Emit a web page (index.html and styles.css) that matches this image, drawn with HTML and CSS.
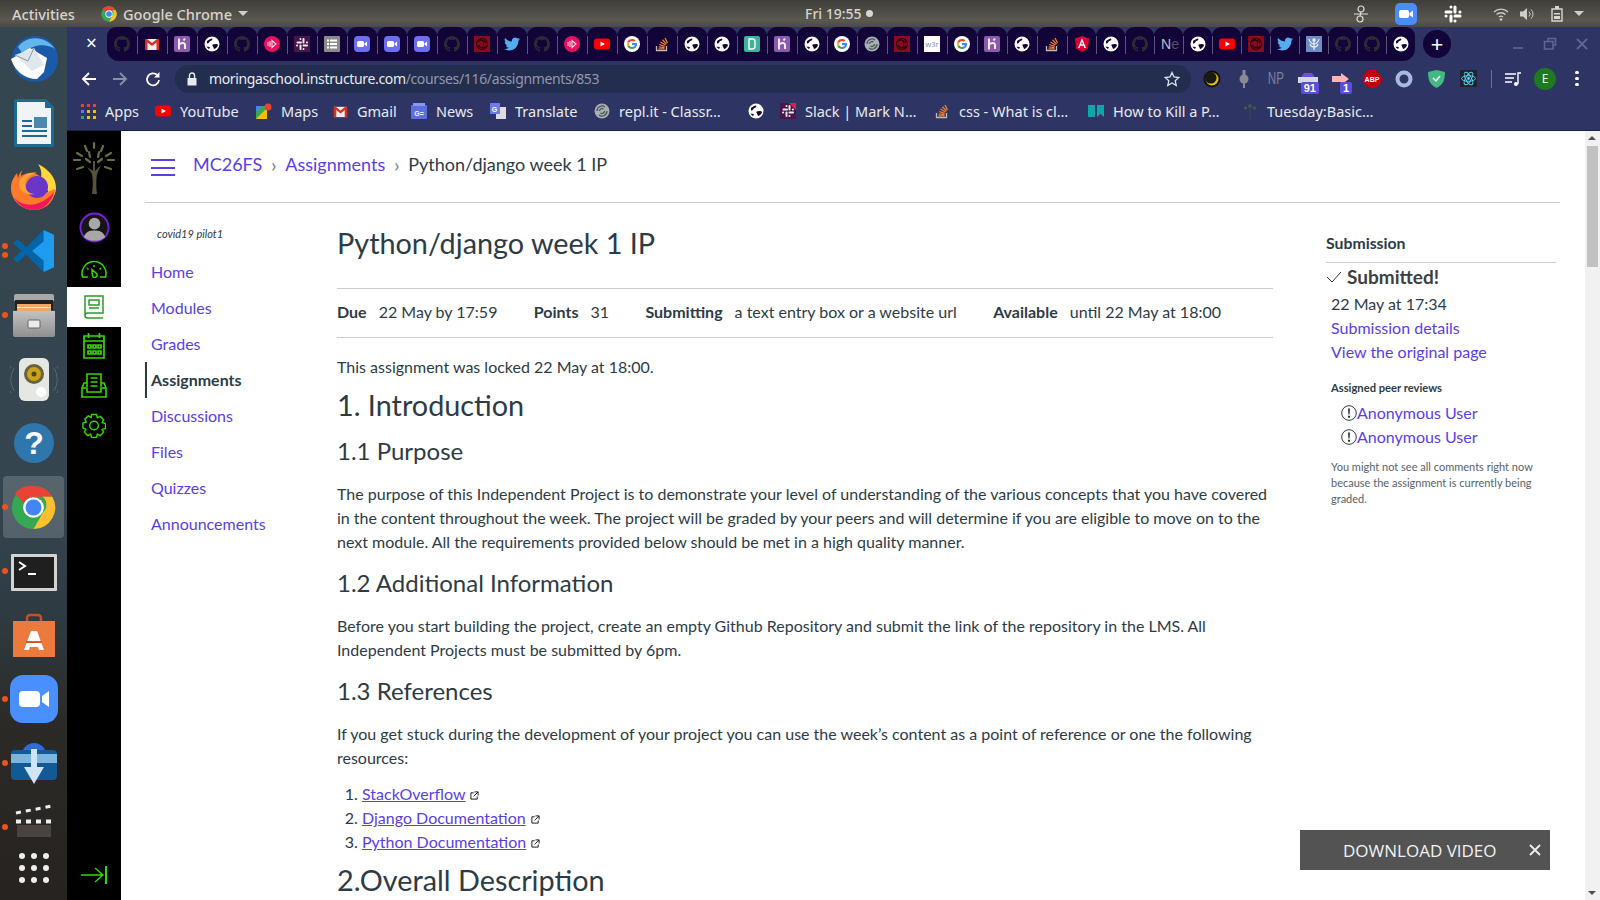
FILE: index.html
```html
<!DOCTYPE html>
<html lang="en">
<head>
    <meta charset="UTF-8">
    <title>Python/django week 1 IP</title>
    <link rel="stylesheet" href="styles.css">
</head>
<body>

<!-- shared favicons -->
<svg class="sprite" width="0" height="0">
    <symbol id="gh" viewBox="0 0 16 16"><path fill="#2b2c33" d="M8 0C3.58 0 0 3.58 0 8c0 3.54 2.29 6.53 5.47 7.59.4.07.55-.17.55-.38 0-.19-.01-.82-.01-1.49-2.01.37-2.53-.49-2.69-.94-.09-.23-.48-.94-.82-1.13-.28-.15-.68-.52-.01-.53.63-.01 1.08.58 1.23.82.72 1.21 1.87.87 2.33.66.07-.52.28-.87.51-1.07-1.78-.2-3.64-.89-3.64-3.95 0-.87.31-1.59.82-2.15-.08-.2-.36-1.02.08-2.12 0 0 .67-.21 2.2.82.64-.18 1.32-.27 2-.27.68 0 1.36.09 2 .27 1.53-1.04 2.2-.82 2.2-.82.44 1.1.16 1.92.08 2.12.51.56.82 1.27.82 2.15 0 3.07-1.87 3.75-3.65 3.95.29.25.54.73.54 1.48 0 1.07-.01 1.93-.01 2.2 0 .21.15.46.55.38A8.013 8.013 0 0016 8c0-4.42-3.58-8-8-8z"/></symbol>
    <symbol id="gmail" viewBox="0 0 16 16"><path fill="#eee" d="M1 3h14v11H1z"/><path fill="#d93025" d="M1 3h2l5 4 5-4h2v11h-2.500V6.500L8 10 3.500 6.500V14H1z"/></symbol>
    <symbol id="heroku" viewBox="0 0 16 16"><rect width="16" height="16" rx="2" fill="#8d5ab0"/><path fill="none" stroke="#eee" stroke-width="2" d="M5 2.500V13.500M5 8.500c2-1.500 6-2.500 6 .5V13M11 2.500l-1.500 2"/></symbol>
    <symbol id="globe" viewBox="0 0 16 16"><circle cx="8" cy="8" r="7.500" fill="#fff"/><path fill="#120338" d="M3 5c2-1.500 4-2.500 5-2.500 1 1 0 2-1.500 2.500S5 8 3 7.500zM8.500 8.500c2-.5 4.500-1 5.500.5-.5 2-2 3.500-4 4 0-1.500-2-3-1.500-4.500zM2.500 10.500c1 .5 2.500 0 3.500 1l-1 1.500c-1-.5-2-1.500-2.500-2.500z"/></symbol>
    <symbol id="podcast" viewBox="0 0 16 16"><circle cx="8" cy="8" r="8" fill="#e6125f"/><path fill="none" stroke="#ffd9e6" stroke-width="1.100" d="M4 6v4M6 5v6M8 4.500v7l4-3.500z"/></symbol>
    <symbol id="slack" viewBox="0 0 16 16"><rect width="16" height="16" fill="#4a154b"/><g stroke="#eee" stroke-width="2" stroke-linecap="round"><path d="M3.500 6.500H7M6.500 3v.1M9.500 3v3.500M13 6.500h-.1M9.500 9.500H13M9.500 13v-.1M6.500 13V9.500M3 9.500h.1"/></g></symbol>
    <symbol id="list" viewBox="0 0 16 16"><rect width="16" height="16" rx="1" fill="#8b8b8b"/><path stroke="#fff" stroke-width="2" d="M6 4.500h7M6 8h7M6 11.500h7M3 4.500h2M3 8h2M3 11.500h2"/></symbol>
    <symbol id="zoomfav" viewBox="0 0 16 16"><rect width="16" height="16" rx="4" fill="#6e6ef0"/><rect x="3" y="5" width="7" height="6" rx="1.500" fill="#fff"/><path fill="#fff" d="M10.500 7.500 13 5.500v5l-2.500-2z"/></symbol>
    <symbol id="solo" viewBox="0 0 16 16"><rect width="16" height="16" fill="#8a0b1c"/><g fill="none" stroke="#2b0410" stroke-width="1.200"><circle cx="8" cy="8" r="5.500"/><path d="M3 6c3-3 8-2 9 1M13 10c-3 3-8 2-9-1M6 3c3 1 5 4 3 8"/></g></symbol>
    <symbol id="tw" viewBox="0 0 24 24"><path fill="#55acee" d="M23.953 4.570a10 10 0 01-2.825.775 4.958 4.958 0 002.163-2.723c-.951.555-2.005.959-3.127 1.184a4.920 4.920 0 00-8.384 4.482C7.690 8.095 4.067 6.130 1.640 3.162a4.822 4.822 0 00-.666 2.475c0 1.710.870 3.213 2.188 4.096a4.904 4.904 0 01-2.228-.616v.060a4.923 4.923 0 003.946 4.827 4.996 4.996 0 01-2.212.085 4.936 4.936 0 004.604 3.417 9.867 9.867 0 01-6.102 2.105c-.390 0-.779-.023-1.170-.067a13.995 13.995 0 007.557 2.209c9.053 0 13.998-7.496 13.998-13.985 0-.210 0-.420-.015-.630A9.935 9.935 0 0024 4.590z"/></symbol>
    <symbol id="yt" viewBox="0 0 16 16"><rect y="2.500" width="16" height="11" rx="3" fill="#f00"/><path fill="#fff" d="M6.500 5.500 11 8l-4.500 2.500z"/></symbol>
    <symbol id="goog" viewBox="0 0 16 16"><circle cx="8" cy="8" r="8" fill="#fff"/><path fill="#4285f4" d="M13 8.200c0-.4 0-.7-.1-1.100H8v2h2.800c-.1.700-.5 1.200-1 1.600l1.600 1.200c1-.9 1.600-2.200 1.600-3.700z"/><path fill="#34a853" d="M8 13c1.400 0 2.500-.4 3.400-1.200l-1.600-1.200c-.5.300-1.100.5-1.800.5-1.300 0-2.500-.9-2.900-2.100L3.400 10.200C4.200 11.900 6 13 8 13z"/><path fill="#fbbc05" d="M5.100 9c-.2-.6-.2-1.300 0-1.900L3.400 5.800c-.7 1.400-.7 3 0 4.400z"/><path fill="#ea4335" d="M8 5c.8 0 1.400.3 1.900.8l1.500-1.500C10.500 3.500 9.400 3 8 3 6 3 4.200 4.100 3.400 5.800l1.700 1.300C5.500 5.900 6.700 5 8 5z"/></symbol>
    <symbol id="so" viewBox="0 0 16 16"><path fill="none" stroke="#bcbbbb" stroke-width="1.300" d="M2.500 10v4.500h10V10"/><path fill="none" stroke="#f48024" stroke-width="1.300" d="M4.500 12.800h6M4.700 10.800l5.800.8M5.200 8.500l5.500 1.900M6.500 6l5 3M8.500 3.800l4 4.300M11 2l2.500 5"/></symbol>
    <symbol id="dj" viewBox="0 0 16 16"><rect width="16" height="16" rx="2" fill="#3eb39b"/><path fill="none" stroke="#fff" stroke-width="1.400" d="M5 3h3.500a2.500 2.500 0 0 1 2.500 2.500v5A2.500 2.500 0 0 1 8.500 13H5z"/></symbol>
    <symbol id="repl" viewBox="0 0 16 16"><circle cx="8" cy="8" r="7.500" fill="#a9b0b4"/><g fill="none" stroke="#4a5358" stroke-width="1.300"><path d="M3 8a5 5 0 0 1 8-4M13 8a5 5 0 0 1-8 4M5.500 8a2.500 2.500 0 0 1 4-2M10.500 8a2.500 2.500 0 0 1-4 2"/></g></symbol>
    <symbol id="angular" viewBox="0 0 16 16"><path fill="#dd0031" d="M8 0 1 2.500l1 10L8 16l6-3.500 1-10z"/><path fill="#fff" d="M8 2 4 12h1.500l.9-2.300h3.200l.9 2.300H12zM7 8.300 8 5.800l1 2.500z"/></symbol>
    <symbol id="shield" viewBox="0 0 16 16"><rect width="16" height="16" fill="#6f8cc4"/><path fill="none" stroke="#e8eef8" stroke-width="1.200" d="M8 5v9M8 8C6 8 3.500 6 3 3M8 8c2 0 4.500-2 5-5M8 11c-2 0-3.500-1-4-3M8 11c2 0 3.500-1 4-3"/><circle cx="8" cy="4" r="1.800" fill="#e8eef8"/></symbol>
    <symbol id="chrome" viewBox="0 0 48 48"><circle cx="24" cy="24" r="23" fill="#34a853"/><path fill="#ea4335" d="M24 1a23 23 0 0 1 20 11.500H24a11.500 11.500 0 0 0-10.500 7L4 9A23 23 0 0 1 24 1z"/><path fill="#fbc02d" d="M44 12.500A23 23 0 0 1 24 47l10-17.500a11.500 11.500 0 0 0 0-17z"/><circle cx="24" cy="24" r="11" fill="#fff"/><circle cx="24" cy="24" r="8.500" fill="#4285f4"/></symbol>
    <symbol id="extlink" viewBox="0 0 10 10"><path fill="none" stroke="#1c1c1c" stroke-width="1.100" d="M4 2H1v7h7V6M5 1h4v4M9 1 4 6"/></symbol>
    <symbol id="warn" viewBox="0 0 16 16"><circle cx="8" cy="8" r="7.300" fill="none" stroke="#2d3b45" stroke-width="1"/><path fill="#2d3b45" d="M7 3.500h2L8.600 9.500H7.400zM7 10.800h2v2H7z"/></symbol>
</svg>

<div class="topbar">
    <div class="top-left">
        <span class="activities">Activities</span>
        <svg class="top-chrome" width="16" height="16"><use href="#chrome"/></svg>
        <span class="appname">Google Chrome</span>
        <span class="caret"></span>
    </div>
    <div class="clock">Fri 19:55 <span class="clock-dot"></span></div>
    <div class="tray">
        <svg class="tray-person" width="16" height="18" viewBox="0 0 16 18"><g fill="none" stroke="#ddd" stroke-width="1.200"><circle cx="8" cy="4" r="3"/><circle cx="7" cy="14" r="3"/><path d="M1 9h14M8 7 7 11"/></g></svg>
        <svg class="tray-zoom" width="22" height="22" viewBox="0 0 22 22"><rect width="22" height="22" rx="5" fill="#4a8cff"/><rect x="4" y="7" width="10" height="8" rx="2" fill="#fff"/><path fill="#fff" d="m14.500 10 3.500-2.500v7L14.500 12z"/></svg>
        <svg class="tray-slack" width="20" height="20" viewBox="0 0 20 20"><g stroke="#fff" stroke-width="3" stroke-linecap="round"><path d="M3 8h5M8 3v.1M12 3v5M17 8h-.1M12 12h5M12 17v-.1M8 17v-5M3 12h.1"/></g></svg>
        <svg class="tray-wifi" width="16" height="14" viewBox="0 0 16 14"><g fill="none" stroke="#cfcdc6" stroke-width="1.400"><path d="M1 5a10 10 0 0 1 14 0M3.500 7.500a6.500 6.500 0 0 1 9 0"/><path d="M6 10a3 3 0 0 1 4 0"/></g><circle cx="8" cy="12.500" r="1.300" fill="#cfcdc6"/></svg>
        <svg class="tray-vol" width="16" height="14" viewBox="0 0 16 14"><path fill="#cfcdc6" d="M1 4.500h3L8 1v12L4 9.500H1z"/><path fill="none" stroke="#cfcdc6" d="M10 4.500a3.500 3.500 0 0 1 0 5M12 2.500a6 6 0 0 1 0 9"/></svg>
        <svg class="tray-batt" width="12" height="16" viewBox="0 0 12 16"><path fill="none" stroke="#d8d6cf" stroke-width="1.400" d="M1 3h10v12H1z"/><path fill="#d8d6cf" d="M4 0h4v3H4zM3 7h6v1.500H3zM3 10h6v3H3z"/></svg>
        <span class="caret"></span>
    </div>
</div>

<div class="desktop">
    <div class="dock">
        <div class="dock-item"><svg width="48" height="48" viewBox="0 0 48 48"><circle cx="25" cy="24" r="23" fill="#1b5aa8"/><path fill="#64b5ee" d="M8 12C16 0 36 0 45 14c-8-5-20-5-27 1l-6 3z"/><path fill="#fff" d="M1 24 20 13l17 10-3 14-7 7C14 44 5 36 1 24z"/><path fill="#dfe6ec" d="M5 20 24 13l10 17-12 6z"/><path fill="none" stroke="#8b97a1" d="m5 20 13 6 6-13"/></svg></div>
        <div class="dock-item"><svg width="40" height="48" viewBox="0 0 40 48"><path fill="#1c6a96" d="M0 2a2 2 0 0 1 2-2h30l8 8v38a2 2 0 0 1-2 2H2a2 2 0 0 1-2-2z"/><path fill="#f1f4f6" d="M3 3h28v6h6v36H3z"/><path stroke="#1c6a96" stroke-width="2" d="M8 22h10M8 27h10M8 32h25M8 37h25"/><path fill="#4d87ab" d="M20 18h13v11H20z"/></svg></div>
        <div class="dock-item"><svg width="46" height="46" viewBox="0 0 46 46"><path fill="#ffd73a" d="M27 0c10 5 18 13 18 24 0 4-2 8-4 11L30 14c1-5 0-10-3-14z"/><path fill="#ff7a2a" d="M12 5c-2 3-2 5-2 7 3-2 6-3 10-3 7 0 14 6 14 14 0 5-4 9-10 10l20-8c0 13-10 21-21 21C10 46 0 36 0 24 0 17 3 13 6 9l1 5c1-4 3-7 5-9z"/><path fill="#f0175f" d="M3 33c6 9 25 13 40-5-3 11-11 18-20 18C14 46 7 41 3 33z"/><circle cx="26" cy="23" r="11" fill="#6a35c9"/><path fill="#ffa23a" d="M8 19c2-7 10-12 18-10-6 1-12 5-12 12 0 5 4 9 10 9-8 2-17-3-16-11z"/></svg></div>
        <div class="dock-item"><svg width="42" height="42" viewBox="0 0 44 44"><path fill="#0065a9" d="M32 0 14 18 5 10 0 14l9 8-9 8 5 4 9-8 18 18z"/><path fill="#1f9cf0" d="m32 0 11 5v34l-11 5zM32 12 20 22l12 10z"/></svg></div>
        <div class="dock-item"><svg width="42" height="43" viewBox="0 0 42 43"><defs><linearGradient id="cab" x1="0" y1="0" x2="0" y2="1"><stop offset="0" stop-color="#c2c2c2"/><stop offset="1" stop-color="#8f8f8f"/></linearGradient></defs><path fill="#a8a8a8" d="M1 2a2 2 0 0 1 2-2h36a2 2 0 0 1 2 2v5H1z"/><path fill="#222" d="M2 6h38v10H2z"/><path fill="#f0a868" d="M4 10h34v7H4z"/><path fill="#fbe3c8" d="M4 13h34v1H4z"/><path fill="url(#cab)" d="M0 17h42v24a2 2 0 0 1-2 2H2a2 2 0 0 1-2-2z"/><rect x="15" y="26" width="12" height="8" rx="1" fill="#ececec" stroke="#666"/></svg></div>
        <div class="dock-item"><svg width="48" height="43" viewBox="0 0 48 43"><g fill="none" stroke="#506a78"><path d="M4 10a22 22 0 0 0 0 23M44 10a22 22 0 0 1 0 23M1 8a26 26 0 0 0 0 27M47 8a26 26 0 0 1 0 27"/></g><rect x="9" y="0" width="30" height="43" rx="6" fill="#e4e7e4"/><circle cx="24" cy="16" r="10" fill="#6a6238"/><circle cx="24" cy="16" r="7" fill="#c9a21f"/><circle cx="24" cy="16" r="2.500" fill="#4f4718"/><circle cx="31" cy="34" r="5" fill="#fff"/></svg></div>
        <div class="dock-item"><svg width="40" height="40" viewBox="0 0 40 40"><circle cx="20" cy="20" r="20" fill="#2f76ad"/><text x="20" y="31" text-anchor="middle" class="help-mark">?</text></svg></div>
        <div class="dock-item dock-active"><svg width="45" height="45"><use href="#chrome"/></svg></div>
        <div class="dock-item dock-term"><svg width="46" height="37" viewBox="0 0 46 37"><rect width="46" height="37" rx="1" fill="#d3d3d3"/><rect x="3" y="3" width="40" height="31" fill="#1f1f1f"/><path fill="none" stroke="#fff" stroke-width="2" d="m8 8 6 4-6 4"/><path stroke="#fff" stroke-width="2" d="M17 20h8"/></svg></div>
        <div class="dock-item"><svg width="42" height="44" viewBox="0 0 42 44"><path fill="none" stroke="#c9501e" stroke-width="2.500" d="M14 13V5a3 3 0 0 1 3-3h8a3 3 0 0 1 3 3v8"/><path fill="#ec7a3c" d="M0 8h42v36H0z"/><path fill="#fff" d="M18 18h6l7 19h-5l-1-3h-8l-1 3h-5z"/><path fill="#e2561d" d="M13 28h16v2H13z"/></svg></div>
        <div class="dock-item"><svg width="48" height="48" viewBox="0 0 48 48"><rect width="48" height="48" rx="13" fill="#4a8fff"/><rect x="9" y="16" width="21" height="16" rx="4" fill="#fff"/><path fill="#fff" d="m32 21 7-5v16l-7-5z"/></svg></div>
        <div class="dock-item"><svg width="46" height="41" viewBox="0 0 46 41"><circle cx="23" cy="12" r="12" fill="#2f6cd6"/><rect y="7" width="46" height="30" rx="4" fill="#125a96"/><path fill="#7fb4df" d="M0 11h46v9H0z"/><path fill="#cfe4f5" d="M20 6h6v18h7L23 41 13 24h7z"/></svg></div>
        <div class="dock-item dock-clap"><svg width="40" height="33" viewBox="0 0 40 33"><path fill="#2b2b2b" d="M0 8 38 0l1 5L1 13z"/><path stroke="#eee" stroke-width="3" stroke-dasharray="5 5" d="M2 9 38 2"/><path fill="#2b2b2b" d="M1 15h38v5H1z"/><path stroke="#eee" stroke-width="4" stroke-dasharray="5 5" d="M2 17.500h36"/><path fill="#4a4440" d="M3 21h34v12H3z"/></svg></div>
        <div class="dock-grid">
            <span></span><span></span><span></span>
            <span></span><span></span><span></span>
            <span></span><span></span><span></span>
        </div>
        <div class="dock-dots">
            <i class="dot-vs1"></i><i class="dot-vs2"></i><i class="dot-files"></i><i class="dot-chrome"></i><i class="dot-term"></i><i class="dot-zoom"></i><i class="dot-down"></i><i class="dot-clap"></i>
        </div>
    </div>

    <div class="browser">
        <div class="tabstrip">
            <div class="tab-active">×</div>
            <div class="tabs">
                <div class="tab"><svg><use href="#gh"/></svg></div>
                <div class="tab"><svg><use href="#gmail"/></svg></div>
                <div class="tab"><svg><use href="#heroku"/></svg></div>
                <div class="tab"><svg><use href="#globe"/></svg></div>
                <div class="tab"><svg><use href="#gh"/></svg></div>
                <div class="tab"><svg><use href="#podcast"/></svg></div>
                <div class="tab"><svg><use href="#slack"/></svg></div>
                <div class="tab"><svg><use href="#list"/></svg></div>
                <div class="tab"><svg><use href="#zoomfav"/></svg></div>
                <div class="tab"><svg><use href="#zoomfav"/></svg></div>
                <div class="tab"><svg><use href="#zoomfav"/></svg></div>
                <div class="tab"><svg><use href="#gh"/></svg></div>
                <div class="tab"><svg><use href="#solo"/></svg></div>
                <div class="tab"><svg><use href="#tw"/></svg></div>
                <div class="tab"><svg><use href="#gh"/></svg></div>
                <div class="tab"><svg><use href="#podcast"/></svg></div>
                <div class="tab"><svg><use href="#yt"/></svg></div>
                <div class="tab"><svg><use href="#goog"/></svg></div>
                <div class="tab"><svg><use href="#so"/></svg></div>
                <div class="tab"><svg><use href="#globe"/></svg></div>
                <div class="tab"><svg><use href="#globe"/></svg></div>
                <div class="tab"><svg><use href="#dj"/></svg></div>
                <div class="tab"><svg><use href="#heroku"/></svg></div>
                <div class="tab"><svg><use href="#globe"/></svg></div>
                <div class="tab"><svg><use href="#goog"/></svg></div>
                <div class="tab"><svg><use href="#repl"/></svg></div>
                <div class="tab"><svg><use href="#solo"/></svg></div>
                <div class="tab"><svg viewBox="0 0 16 16"><rect width="16" height="16" fill="#fff"/><text x="8" y="11" text-anchor="middle" class="fav-w3r">w3r</text></svg></div>
                <div class="tab"><svg><use href="#goog"/></svg></div>
                <div class="tab"><svg><use href="#heroku"/></svg></div>
                <div class="tab"><svg><use href="#globe"/></svg></div>
                <div class="tab"><svg><use href="#so"/></svg></div>
                <div class="tab tab-narrow"><svg><use href="#angular"/></svg></div>
                <div class="tab tab-narrow"><svg><use href="#globe"/></svg></div>
                <div class="tab tab-narrow"><svg><use href="#gh"/></svg></div>
                <div class="tab tab-narrow tab-n">N<span>e</span></div>
                <div class="tab tab-narrow"><svg><use href="#globe"/></svg></div>
                <div class="tab tab-narrow"><svg><use href="#yt"/></svg></div>
                <div class="tab tab-narrow"><svg><use href="#solo"/></svg></div>
                <div class="tab tab-narrow"><svg><use href="#tw"/></svg></div>
                <div class="tab tab-narrow"><svg><use href="#shield"/></svg></div>
                <div class="tab tab-narrow"><svg><use href="#gh"/></svg></div>
                <div class="tab tab-narrow"><svg><use href="#gh"/></svg></div>
                <div class="tab tab-narrow"><svg><use href="#globe"/></svg></div>
            </div>
            <div class="newtab">+</div>
            <div class="winctl">
                <svg width="14" height="14" viewBox="0 0 14 14"><path stroke="#5f678f" stroke-width="1.600" d="M2 11h10"/></svg>
                <svg width="14" height="14" viewBox="0 0 14 14"><path fill="none" stroke="#5f678f" stroke-width="1.600" d="M5 4V1.500h7.500V8H10M1.500 4.500H10V12H1.500z"/></svg>
                <svg width="14" height="14" viewBox="0 0 14 14"><path stroke="#5f678f" stroke-width="1.800" d="m2 2 10 10M12 2 2 12"/></svg>
            </div>
        </div>

        <div class="toolbar">
            <svg class="nav-btn" width="18" height="18" viewBox="0 0 18 18"><path fill="none" stroke="#fff" stroke-width="1.800" d="M16 9H3M9 3 3 9l6 6"/></svg>
            <svg class="nav-btn nav-fwd" width="18" height="18" viewBox="0 0 18 18"><path fill="none" stroke="#8a8fa8" stroke-width="1.800" d="M2 9h13M9 3l6 6-6 6"/></svg>
            <svg class="nav-btn" width="18" height="18" viewBox="0 0 18 18"><path fill="none" stroke="#fff" stroke-width="1.800" d="M15 10a6 6 0 1 1-1.800-5"/><path fill="#fff" d="M15.500 2v5.500H10z"/></svg>
            <div class="omnibox">
                <svg class="lock" width="12" height="14" viewBox="0 0 12 14"><path fill="#e8eaf0" d="M1.500 6h9v7.500h-9z"/><path fill="none" stroke="#e8eaf0" stroke-width="1.400" d="M3.500 6V3.500a2.500 2.500 0 0 1 5 0V6"/></svg>
                <span class="url">moringaschool.instructure.com<span class="url-path">/courses/116/assignments/853</span></span>
                <svg class="star" width="16" height="16" viewBox="0 0 16 16"><path fill="none" stroke="#dfe1ea" stroke-width="1.300" d="m8 1.500 2 4.500 4.800.5-3.600 3.200 1 4.800L8 12l-4.200 2.500 1-4.800L1.200 6.500 6 6z"/></svg>
            </div>
            <div class="extensions">
                <div class="ext"><svg width="18" height="18" viewBox="0 0 18 18"><circle cx="9" cy="9" r="8.500" fill="#111"/><circle cx="9" cy="9" r="6.500" fill="#d8c400"/><circle cx="7.800" cy="7.800" r="5.800" fill="#1a1a10"/></svg></div>
                <div class="ext"><svg width="12" height="20" viewBox="0 0 12 20"><g fill="#8a8a92"><circle cx="6" cy="10" r="4.500"/><path d="M4.500 1h3v5h-3zM5 14h2v5H5z"/></g></svg></div>
                <div class="ext"><span class="ext-np">NP</span></div>
                <div class="ext ext-badged"><svg width="20" height="10" viewBox="0 0 20 10"><path fill="#d5d9e4" d="M0 4h20v6H0z"/><path fill="#6a4fe8" d="M6 0h8l3 4H3z"/></svg><b class="badge badge-91">91</b></div>
                <div class="ext ext-badged"><svg width="17" height="12" viewBox="0 0 17 12"><path fill="#ffb3b3" d="M0 3h9V0l8 6-8 6V9H0z"/></svg><b class="badge badge-1">1</b></div>
                <div class="ext"><svg width="18" height="18" viewBox="0 0 18 18"><path fill="#c4000a" d="M5.500 0h7L18 5.500v7L12.500 18h-7L0 12.500v-7z"/><text x="9" y="11.500" text-anchor="middle" class="abp">ABP</text></svg></div>
                <div class="ext"><svg width="18" height="18" viewBox="0 0 18 18"><circle cx="9" cy="9" r="6.500" fill="none" stroke="#a9bbdc" stroke-width="4"/></svg></div>
                <div class="ext"><svg width="17" height="18" viewBox="0 0 17 18"><path fill="#42b883" d="M0 2 8.500 0 17 2c0 8-2 13-8.500 16C2 15 0 10 0 2z"/><path fill="none" stroke="#fff" stroke-width="1.500" d="m5 8 3 3 4-5"/></svg></div>
                <div class="ext"><svg width="17" height="17" viewBox="0 0 17 17"><rect width="17" height="17" fill="#20232a"/><g fill="none" stroke="#61dafb" stroke-width=".9"><ellipse cx="8.500" cy="8.500" rx="7" ry="2.800"/><ellipse cx="8.500" cy="8.500" rx="7" ry="2.800" transform="rotate(60 8.500 8.500)"/><ellipse cx="8.500" cy="8.500" rx="7" ry="2.800" transform="rotate(120 8.500 8.500)"/></g><circle cx="8.500" cy="8.500" r="1.400" fill="#61dafb"/></svg></div>
                <div class="ext-sep"></div>
                <div class="ext"><svg width="16" height="14" viewBox="0 0 16 14"><path stroke="#fff" stroke-width="1.400" d="M0 2h11M0 6h9M0 10h7"/><path fill="none" stroke="#fff" stroke-width="1.400" d="M13 12V1h3"/><circle cx="11" cy="12" r="2" fill="#fff"/></svg></div>
                <div class="ext"><span class="profile">E</span></div>
                <div class="ext"><span class="kebab"><i></i><i></i><i></i></span></div>
            </div>
        </div>

        <div class="bookmarks">
            <div class="bm bm-apps"><svg width="15" height="15" viewBox="0 0 15 15"><g fill="#ea4335"><path d="M0 0h3v3H0zM6 0h3v3H6zM12 0h3v3h-3z"/></g><g fill="#4285f4"><path d="M0 6h3v3H0z"/></g><g fill="#fbbc05"><path d="M6 6h3v3H6zM12 6h3v3h-3zM6 12h3v3H6zM12 12h3v3h-3z"/></g><g fill="#34a853"><path d="M0 12h3v3H0z"/></g></svg>Apps</div>
            <div class="bm bm-yt"><svg width="16" height="16"><use href="#yt"/></svg>YouTube</div>
            <div class="bm bm-maps"><svg width="16" height="16" viewBox="0 0 16 16"><path fill="#34a853" d="M0 3h11v13H0z"/><path fill="#fbbc05" d="M0 16 11 5v11z"/><path fill="#4285f4" d="M0 3h6L0 9z"/><circle cx="12" cy="4" r="3.500" fill="#ea4335"/></svg>Maps</div>
            <div class="bm bm-gmail"><svg width="15" height="15"><use href="#gmail"/></svg>Gmail</div>
            <div class="bm bm-news"><svg width="16" height="16" viewBox="0 0 16 16"><rect y="2" width="16" height="14" rx="1" fill="#5c6ee0"/><path fill="#8a97ee" d="M2 0h12v3H2z"/><text x="8" y="12.500" text-anchor="middle" class="news-g">G=</text></svg>News</div>
            <div class="bm bm-translate"><svg width="16" height="16" viewBox="0 0 16 16"><path fill="#ddd" d="M6 4h10v12H6z"/><path fill="#6b7be8" d="M0 0h10v11H0z"/><text x="4.500" y="8.500" text-anchor="middle" class="news-g">G</text></svg>Translate</div>
            <div class="bm bm-long"><svg width="16" height="16"><use href="#repl"/></svg>repl.it - Classr…</div>
            <div class="bm bm-globe"><svg width="16" height="16"><use href="#globe"/></svg></div>
            <div class="bm bm-long"><svg width="16" height="16" viewBox="0 0 16 16"><rect width="16" height="16" fill="#4a154b"/><path fill="#e01e5a" d="M9 0h7v7z"/><g stroke="#eee" stroke-width="2" stroke-linecap="round"><path d="M3.500 6.500H7M6.500 3v.1M9.500 3v3.500M13 6.500h-.1M9.500 9.500H13M9.500 13v-.1M6.500 13V9.500M3 9.500h.1"/></g></svg>Slack | Mark N…</div>
            <div class="bm bm-long"><svg width="16" height="16"><use href="#so"/></svg>css - What is cl…</div>
            <div class="bm bm-long"><svg width="16" height="16" viewBox="0 0 16 16"><path fill="#12a4a8" d="M0 2h7v12H0zM9 2h7v12l-3.500-3L9 14z"/></svg>How to Kill a P…</div>
            <div class="bm bm-long"><svg width="16" height="16" viewBox="0 0 16 16"><path stroke="#3d4450" stroke-width="1.500" d="M8 6v10"/><g fill="#3f5a48"><circle cx="8" cy="3" r="2"/><circle cx="3.500" cy="5" r="1.600"/><circle cx="12.500" cy="5" r="1.600"/></g></svg>Tuesday:Basic…</div>
        </div>

        <div class="viewport">
            <div class="lms-nav">
                <div class="lms-logo">
                    <svg width="44" height="54" viewBox="0 0 44 54"><path fill="#55533a" d="M20 54c1-8 1-14 0-20l-5-7 6 4 0-10 2 0v10l6-6-4 9c-1 6-1 14 0 20z"/><g stroke="#66703a" stroke-width="2.200" stroke-linecap="round"><path d="M22 3v5M13 6l2 5M31 6l-2 5M5 13l5 3M39 13l-5 3M2 20h6M36 20h6M5 29l6-2M39 29l-6-2M14 19l4 3M30 19l-4 3M17 12l1 5M27 12l-1 5"/></g></svg>
                </div>
                <div class="lms-item"><svg width="31" height="31" viewBox="0 0 32 32"><circle cx="16" cy="16" r="14.500" fill="#161616" stroke="#7a1fe0" stroke-width="2"/><circle cx="16" cy="12" r="6" fill="#a8a8a8"/><path fill="#a8a8a8" d="M5 26c2-6 6-7 11-7s9 1 11 7c-6 5-16 5-22 0z"/></svg></div>
                <div class="lms-item lms-gauge"><svg width="26" height="17" viewBox="0 0 26 17"><g fill="none" stroke="#35d900" stroke-width="1.500"><path d="M7 16H1.500a12 12 0 1 1 23 0H19"/><path d="M13 4v2M6 7l1.500 1.500M20 7l-1.500 1.500"/><path d="m11 8.500 4.500 4a2.500 2.500 0 0 1-3.500 3.500c-1-2-1-5-1-7.500z"/></g></svg></div>
                <div class="lms-item lms-active"><svg width="20" height="24" viewBox="0 0 20 24"><g fill="none" stroke="#2a9a2a" stroke-width="1.500"><path d="M1 20V1h18v17H3.500a2.500 2.500 0 0 0 0 5H19"/><path d="M5 5h10v5H5zM5 13h10"/></g></svg></div>
                <div class="lms-item"><svg width="22" height="26" viewBox="0 0 22 26"><g fill="none" stroke="#35d900" stroke-width="1.700"><path d="M1 3h20v22H1zM1 8h20M5.500 0v5M16.500 0v5"/><path d="M5 12h3v3H5zM10 12h3v3h-3zM15 12h3v3h-3zM5 18h3v3H5zM10 18h3v3h-3zM15 18h3v3h-3z"/></g></svg></div>
                <div class="lms-item"><svg width="26" height="25" viewBox="0 0 26 25"><g fill="none" stroke="#35d900" stroke-width="1.600"><path d="M6 14V1h14v13M9.500 5h7M9.500 9h7M9.500 13h7"/><path d="M6 10H3l-2 5v9h24v-9l-2-5h-3M1 15h5v4h14v-4h5"/></g></svg></div>
                <div class="lms-item"><svg width="24" height="25" viewBox="0 0 25 25"><g fill="none" stroke="#35d900" stroke-width="1.500"><path d="M10 1h5l1 3.500 3-1.500 3.500 3.500-1.500 3 3.500 1v5l-3.500 1 1.500 3-3.500 3.500-3-1.500-1 3.500h-5l-1-3.500-3 1.500-3.500-3.500 1.500-3L1 15v-5l3.500-1-1.500-3L6.500 2.500l3 1.500z"/><circle cx="12.500" cy="12.500" r="4.500"/></g></svg></div>
                <div class="lms-collapse"><svg width="26" height="18" viewBox="0 0 26 18"><path fill="none" stroke="#35d900" stroke-width="1.300" d="M0 9h22M14 2l8 7-8 7"/><path stroke="#35d900" stroke-width="2" d="M25 0v18"/></svg></div>
            </div>

            <div class="page">
                <div class="crumbs">
                    <div class="burger"><i></i><i></i><i></i></div>
                    <a class="crumb-link">MC26FS</a>
                    <span class="crumb-sep">›</span>
                    <a class="crumb-link">Assignments</a>
                    <span class="crumb-sep">›</span>
                    <span class="crumb-here">Python/django week 1 IP</span>
                </div>
                <div class="columns">
                    <div class="coursenav">
                        <div class="term">covid19 pilot1</div>
                        <a class="cn-link">Home</a>
                        <a class="cn-link">Modules</a>
                        <a class="cn-link">Grades</a>
                        <a class="cn-link cn-active">Assignments</a>
                        <a class="cn-link">Discussions</a>
                        <a class="cn-link">Files</a>
                        <a class="cn-link">Quizzes</a>
                        <a class="cn-link">Announcements</a>
                    </div>

                    <div class="content">
                        <h1>Python/django week 1 IP</h1>
                        <div class="details">
                            <span class="d-item"><b>Due</b>22 May by 17:59</span>
                            <span class="d-item"><b>Points</b>31</span>
                            <span class="d-item"><b>Submitting</b>a text entry box or a website url</span>
                            <span class="d-item"><b>Available</b>until 22 May at 18:00</span>
                        </div>
                        <p class="locked">This assignment was locked 22 May at 18:00.</p>
                        <h2>1. Introduction</h2>
                        <h3>1.1 Purpose</h3>
                        <p>The purpose of this Independent Project is to demonstrate your level of understanding of the various concepts that you have covered in the content throughout the week. The project will be graded by your peers and will determine if you are eligible to move on to the next module. All the requirements provided below should be met in a high quality manner.</p>
                        <h3>1.2 Additional Information</h3>
                        <p>Before you start building the project, create an empty Github Repository and submit the link of the repository in the LMS. All Independent Projects must be submitted by 6pm.</p>
                        <h3>1.3 References</h3>
                        <p>If you get stuck during the development of your project you can use the week’s content as a point of reference or one the following resources:</p>
                        <ol>
                            <li><a>StackOverflow</a><svg class="ext-link"><use href="#extlink"/></svg></li>
                            <li><a>Django Documentation</a><svg class="ext-link"><use href="#extlink"/></svg></li>
                            <li><a>Python Documentation</a><svg class="ext-link"><use href="#extlink"/></svg></li>
                        </ol>
                        <h2>2.Overall Description</h2>
                    </div>

                    <div class="sidebar">
                        <h4>Submission</h4>
                        <div class="submitted">
                            <svg width="16" height="12" viewBox="0 0 16 12"><path fill="none" stroke="#2d3b45" d="m1 6 5 5L15 1"/></svg>
                            Submitted!
                        </div>
                        <div class="sb-line">22 May at 17:34</div>
                        <a class="sb-line sb-link">Submission details</a>
                        <a class="sb-line sb-link">View the original page</a>
                        <div class="peer-title">Assigned peer reviews</div>
                        <div class="peer"><svg width="16" height="16"><use href="#warn"/></svg><a>Anonymous User</a></div>
                        <div class="peer"><svg width="16" height="16"><use href="#warn"/></svg><a>Anonymous User</a></div>
                        <p class="peer-note">You might not see all comments right now because the assignment is currently being graded.</p>
                    </div>
                </div>
            </div>

            <div class="scrollbar">
                <span class="sb-up"></span>
                <span class="sb-thumb"></span>
                <span class="sb-down"></span>
            </div>
        </div>
    </div>
</div>

<div class="download">
    <span>DOWNLOAD VIDEO</span>
    <svg width="12" height="12" viewBox="0 0 12 12"><path stroke="#eee" stroke-width="1.800" d="m1 1 10 10M11 1 1 11"/></svg>
</div>

</body>
</html>
```

FILE: styles.css
```css
* {
    box-sizing: border-box;
}
html, body {
    margin: 0;
    height: 900px;
    overflow: hidden;
}
body {
    font-family: Lato, sans-serif;
    font-size: 16px;
    color: #2d3b45;
    background: #fff;
}
.sprite {
    position: absolute;
}

/* gnome top bar */
.topbar {
    height: 27px;
    display: grid;
    grid-template-columns: 805px auto 1fr;
    align-items: center;
    background: linear-gradient(#3e3d38, #5a5850 75%, #4a4944);
    color: #d8d5ce;
    font-family: "Noto Sans", sans-serif;
    font-size: 14.600px;
    font-weight: 500;
}
.top-left {
    display: flex;
    align-items: center;
    padding-left: 12px;
}
.activities {
    width: 89px;
}
.top-chrome {
    margin-right: 6px;
}
.appname {
    margin-right: 6px;
}
.caret {
    width: 0;
    height: 0;
    border: 5px solid transparent;
    border-top: 5px solid #d0cec7;
    border-bottom: 0;
}
.clock {
    display: flex;
    align-items: center;
    gap: 4px;
    font-size: 14px;
}
.clock-dot {
    width: 7px;
    height: 7px;
    border-radius: 50%;
    background: #d8d5ce;
}
.tray {
    display: flex;
    align-items: center;
    justify-content: flex-end;
    padding-right: 16px;
}
.tray-zoom { margin-left: 26px; }
.tray-slack { margin-left: 26px; }
.tray-wifi { margin-left: 30px; }
.tray-vol { margin-left: 10px; }
.tray-batt { margin-left: 16px; }
.tray .caret { margin-left: 11px; }

.desktop {
    display: flex;
    height: 873px;
}

/* ubuntu dock */
.dock {
    position: relative;
    width: 67px;
    flex: none;
    display: flex;
    flex-direction: column;
    background: linear-gradient(#34464f 0%, #35454f 55%, #2e3a40 68%, #2c2a27 80%, #262320 100%);
}
.dock-item {
    height: 64px;
    flex: none;
    display: flex;
    align-items: center;
    justify-content: center;
}
.help-mark {
    font-family: "Liberation Sans", sans-serif;
    font-size: 32px;
    font-weight: 700;
    fill: #fff;
}
.dock-active {
    background: rgba(255, 255, 255, .17);
    border-radius: 4px;
    margin: 1px 3px;
    height: 62px;
}
.dock-term {
    padding-top: 3px;
}
.dock-clap {
    align-items: flex-start;
    padding-top: 9px;
}
.dock-grid {
    margin: -6px auto 0;
    display: grid;
    grid-template-columns: repeat(3, 6px);
    gap: 6px;
}
.dock-grid span {
    width: 6px;
    height: 6px;
    border-radius: 50%;
    background: #eee;
}
.dock-dots i {
    position: absolute;
    left: 2px;
    width: 6px;
    height: 6px;
    border-radius: 50%;
    background: #e95420;
}
.dot-vs1 { top: 216px; }
.dot-vs2 { top: 225px; }
.dot-files { top: 285px; }
.dot-chrome { top: 477px; }
.dot-term { top: 541px; }
.dot-zoom { top: 669px; }
.dot-down { top: 733px; }
.dot-clap { top: 797px; }

/* chrome window */
.browser {
    flex: 1;
    min-width: 0;
    display: flex;
    flex-direction: column;
    background: #2e3564;
}
.tabstrip {
    height: 34px;
    flex: none;
    display: flex;
    align-items: stretch;
}
.tab-active {
    width: 40px;
    color: #fff;
    font-family: "Noto Sans", sans-serif;
    font-size: 19px;
    line-height: 33px;
    text-align: center;
    padding-left: 9px;
}
.tabs {
    display: flex;
    align-items: stretch;
}
.tab {
    position: relative;
    width: 30px;
    display: flex;
    align-items: center;
    justify-content: center;
    background: #120338;
    border-radius: 9px 9px 0 0;
}
.tab:first-child {
    border-bottom-left-radius: 12px;
}
.tab:last-child {
    border-bottom-right-radius: 12px;
}
.tab + .tab::before {
    content: "";
    position: absolute;
    left: 0;
    top: 9px;
    height: 18px;
    width: 1px;
    background: #5a5878;
}
.tab svg {
    width: 16px;
    height: 16px;
}
.tab-narrow {
    width: 29px;
}
.tab-n {
    color: #bdbdc7;
    font-family: "Liberation Sans", sans-serif;
    font-size: 14px;
    justify-content: flex-start;
    padding-left: 7px;
}
.tab-n span {
    color: #55536a;
}
.fav-w3r {
    font-family: "Noto Sans", sans-serif;
    font-size: 7.500px;
    fill: #7f8fc0;
}
.newtab {
    width: 28px;
    height: 28px;
    margin: 3px 0 0 8px;
    border-radius: 50%;
    background: #120338;
    color: #fff;
    font-family: "Noto Sans", sans-serif;
    font-size: 22px;
    line-height: 27px;
    text-align: center;
}
.winctl {
    flex: 1;
    display: flex;
    align-items: center;
    justify-content: flex-end;
    gap: 18px;
    padding-right: 11px;
}

.toolbar {
    height: 35px;
    flex: none;
    display: flex;
    align-items: center;
    padding-left: 13px;
}
.nav-btn {
    margin-right: 13px;
}
.nav-fwd {
    margin-right: 15px;
}
.omnibox {
    width: 1016px;
    height: 28px;
    display: flex;
    align-items: center;
    border-radius: 14px;
    background: #232d4f;
    padding: 0 11px;
    font-family: "Noto Sans", sans-serif;
    font-size: 14px;
}
.lock {
    margin-right: 11px;
}
.url {
    flex: 1;
    color: #e8eaf0;
    letter-spacing: -.35px;
}
.url-path {
    color: #9498ad;
}
.extensions {
    display: flex;
    align-items: center;
    padding-left: 5px;
}
.ext {
    position: relative;
    width: 32px;
    height: 30px;
    display: flex;
    align-items: center;
    justify-content: center;
}
.ext-np {
    color: #7d8099;
    font-family: "Liberation Sans", sans-serif;
    font-size: 17px;
    transform: scaleX(.68);
}
.ext-badged {
    align-items: flex-start;
    padding-top: 9px;
}
.abp {
    font-family: "Liberation Sans", sans-serif;
    font-size: 7px;
    font-weight: 700;
    fill: #fff;
}
.badge {
    position: absolute;
    bottom: 0;
    background: #5b4de0;
    border-radius: 2px;
    color: #fff;
    font-family: "Liberation Sans", sans-serif;
    font-size: 11px;
    line-height: 12px;
    padding: 0 3px;
}
.badge-91 { right: 5px; }
.badge-1 { right: 4px; }
.ext-sep {
    width: 1px;
    height: 18px;
    margin: 0 5px 0 7px;
    background: #6a7099;
}
.profile {
    width: 22px;
    height: 22px;
    border-radius: 50%;
    background: #1e7a1e;
    color: #e8f2e8;
    font-family: "Noto Sans", sans-serif;
    font-size: 12px;
    line-height: 22px;
    text-align: center;
}
.kebab {
    display: flex;
    flex-direction: column;
    gap: 2.500px;
}
.kebab i {
    width: 3.500px;
    height: 3.500px;
    border-radius: 50%;
    background: #fff;
}

.bookmarks {
    height: 35px;
    flex: none;
    display: flex;
    align-items: center;
    padding: 0 0 4px 14px;
    color: #e8eaf0;
    font-family: "Noto Sans", sans-serif;
    font-size: 14.500px;
    border-bottom: 1px solid #1c2344;
}
.bm {
    display: flex;
    align-items: center;
    gap: 9px;
    white-space: nowrap;
}
.bm-apps { width: 74px; }
.bm-yt { width: 101px; }
.bm-maps { width: 77px; }
.bm-gmail { width: 78px; }
.bm-news { width: 79px; }
.bm-translate { width: 104px; }
.bm-long { width: 154px; }
.bm-globe { width: 32px; }
.news-g {
    font-family: "Liberation Sans", sans-serif;
    font-size: 7px;
    font-weight: 700;
    fill: #fff;
}

/* page in the viewport */
.viewport {
    flex: 1;
    min-height: 0;
    display: flex;
    background: #fff;
}
.lms-nav {
    width: 54px;
    flex: none;
    display: flex;
    flex-direction: column;
    background: #000;
}
.lms-logo {
    height: 77px;
    display: flex;
    justify-content: center;
    padding-top: 9px;
}
.lms-item {
    height: 39.500px;
    display: flex;
    align-items: center;
    justify-content: center;
}
.lms-gauge {
    padding-top: 5px;
}
.lms-active {
    background: #fff;
}
.lms-collapse {
    margin-top: auto;
    height: 50px;
    display: flex;
    justify-content: center;
    padding-top: 16px;
}
.page {
    flex: 1;
    min-width: 0;
    padding: 0 25px 0 24px;
    overflow: hidden;
}
.crumbs {
    height: 72px;
    display: flex;
    align-items: flex-start;
    padding-top: 20px;
    border-bottom: 1px solid #c7cdd1;
    font-size: 18px;
    line-height: 26px;
}
.burger {
    width: 24px;
    margin: 8px 18px 0 6px;
    display: flex;
    flex-direction: column;
    gap: 5.500px;
}
.burger i {
    height: 2px;
    background: #5a3ee6;
}
.crumb-link {
    color: #5a3ee6;
}
.crumb-sep {
    width: 23px;
    text-align: center;
    color: #73818c;
    font-size: 20px;
}
.crumb-here {
    color: #2d3b45;
}
.columns {
    display: flex;
    align-items: flex-start;
}
.coursenav {
    width: 192px;
    flex: none;
    padding-top: 22px;
}
.term {
    font-size: 11px;
    font-style: italic;
    line-height: 18px;
    padding-left: 12px;
    margin-bottom: 11px;
}
.cn-link {
    display: block;
    height: 36px;
    line-height: 36px;
    padding-left: 4px;
    margin-left: 2px;
    color: #5a3ee6;
}
.cn-active {
    margin-left: 0;
    padding-left: 4px;
    border-left: 2px solid #2d3b45;
    color: #2d3b45;
    font-weight: 700;
}
.content {
    width: 936px;
    flex: none;
    line-height: 24px;
}
h1 {
    margin: 21px 0 26px;
    font-size: 28.800px;
    font-weight: 400;
    line-height: 38px;
}
.details {
    display: flex;
    height: 50px;
    align-items: center;
    padding-bottom: 2px;
    border-top: 1px solid #c7cdd1;
    border-bottom: 1px solid #c7cdd1;
}
.d-item {
    margin-right: 36.400px;
}
.d-item b {
    margin-right: 12px;
}
p {
    margin: 0;
}
.locked {
    margin-top: 17px;
}
h2 {
    margin: 7px 0 0;
    font-size: 28.800px;
    font-weight: 400;
    line-height: 38px;
}
h3 {
    margin: 12px 0 16px;
    font-size: 24px;
    font-weight: 400;
    line-height: 30px;
}
p + h3 {
    margin-top: 14px;
}
ol {
    margin: 12px 0 0;
    padding-left: 25px;
}
ol + h2 {
    margin-top: 7px;
}
ol a {
    color: #5a3ee6;
    text-decoration: underline;
}
.ext-link {
    width: 9px;
    height: 9px;
    margin-left: 5px;
}
.sidebar {
    width: 230px;
    margin-left: 53px;
    flex: none;
    padding-top: 27px;
    line-height: 24px;
}
h4 {
    margin: 0;
    padding-bottom: 6px;
    border-bottom: 1px solid #c7cdd1;
    font-size: 15.800px;
    font-weight: 700;
    line-height: 26px;
}
.submitted {
    display: flex;
    align-items: center;
    gap: 5px;
    margin-bottom: 1px;
    color: #3f3f3f;
    font-size: 19px;
    font-weight: 700;
    line-height: 28px;
}
.sb-line {
    display: block;
    padding-left: 5px;
}
.sb-link {
    color: #5a3ee6;
}
.peer-title {
    margin-top: 15px;
    padding-left: 5px;
    font-size: 11.200px;
    font-weight: 700;
    line-height: 18px;
}
.peer {
    display: flex;
    align-items: center;
    padding-left: 15px;
    color: #5a3ee6;
}
.peer-title + .peer {
    margin-top: 4px;
}
.peer-note {
    margin-top: 10px;
    padding-left: 5px;
    font-size: 11px;
    line-height: 16px;
    color: #56616a;
}

.scrollbar {
    position: relative;
    width: 15px;
    flex: none;
    background: #f1f1f1;
}
.sb-thumb {
    position: absolute;
    left: 2px;
    top: 15px;
    width: 11px;
    height: 121px;
    background: #c1c1c1;
}
.sb-up, .sb-down {
    position: absolute;
    left: 3px;
    width: 0;
    height: 0;
    border: 4.500px solid transparent;
}
.sb-up {
    top: 1px;
    border-bottom-color: #505050;
}
.sb-down {
    bottom: 1px;
    border-top-color: #505050;
}

/* floats over the page */
.download {
    position: fixed;
    left: 1300px;
    top: 830px;
    width: 250px;
    height: 40px;
    display: flex;
    align-items: center;
    justify-content: space-between;
    padding: 0 9px 0 43px;
    background: #535353;
    color: #f2f2f2;
    font-family: "Open Sans", sans-serif;
    font-size: 17px;
}
```
